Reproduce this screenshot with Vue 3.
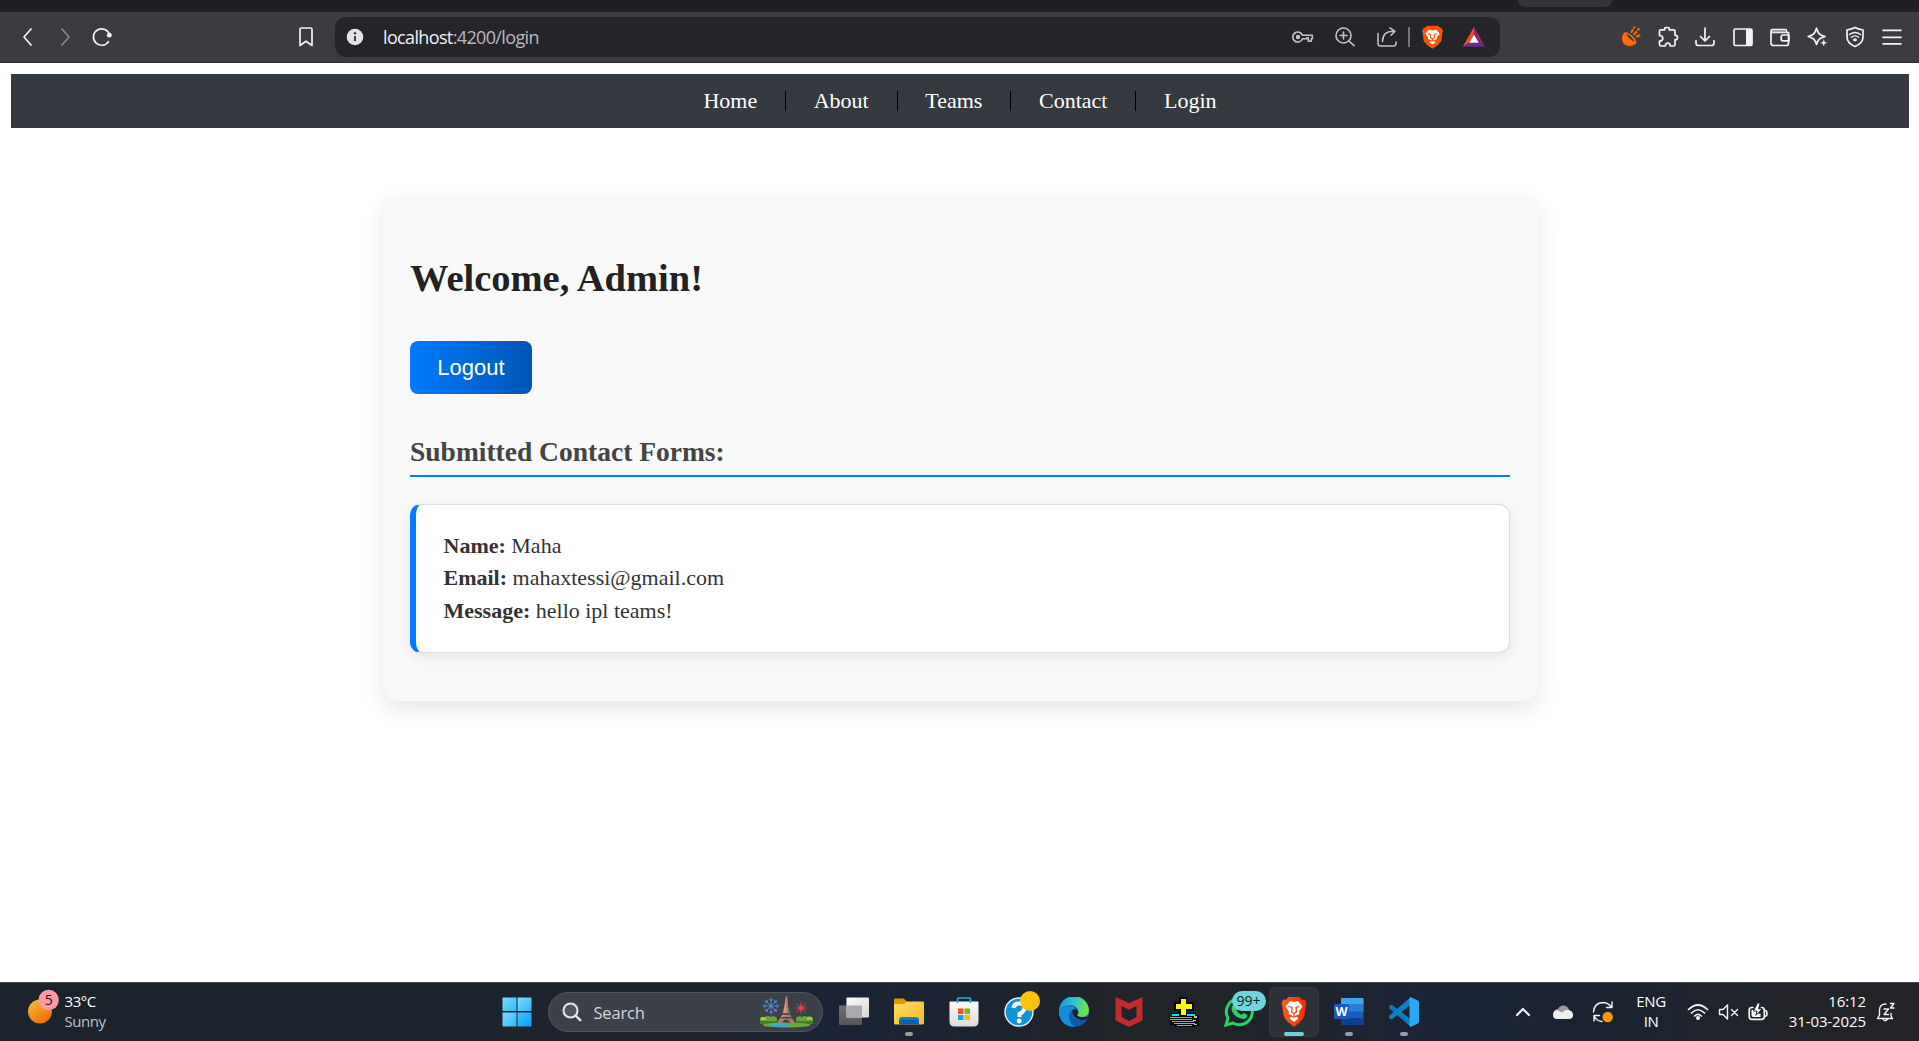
<script setup>
const links = ['Home', 'About', 'Teams', 'Contact', 'Login']
const form = [
  { label: 'Name:', value: 'Maha' },
  { label: 'Email:', value: 'mahaxtessi@gmail.com' },
  { label: 'Message:', value: 'hello ipl teams!' }
]
const rays = [0, 45, 90, 135, 180, 225, 270, 315]
</script>

<template>
  <div class="screen">
    <div class="tabstrip"><div class="tab-nub"></div></div>
    <header class="toolbar">
      <div class="nav-icons">
        <svg width="12" height="20" viewBox="0 0 12 20"><path d="M10 2 3 10l7 8" class="ln" /></svg>
        <svg width="12" height="20" viewBox="0 0 12 20" class="fwd"><path d="m2 2 7 8-7 8" class="ln dim" /></svg>
        <svg width="22" height="20" viewBox="0 0 22 20" class="reload"><path d="M17.5 14.6A8.2 8.2 0 1 1 18.6 8" class="ln" /><circle cx="18.3" cy="8.2" r="2.4" fill="#f3f3f5" /></svg>
      </div>
      <svg class="bookmark" width="16" height="22" viewBox="0 0 16 22"><path d="M2 3.5Q2 2 3.500 2h9Q14 2 14 3.500V19.500l-6-4.200-6 4.200Z" class="ln" /></svg>
      <div class="address">
        <svg class="info" width="18" height="18" viewBox="0 0 18 18"><circle cx="9" cy="9" r="8.300" fill="#e3e2e8" /><path d="M9 8v5" stroke="#3b3a40" stroke-width="2" /><circle cx="9" cy="5.300" r="1.200" fill="#3b3a40" /></svg>
        <span class="url"><b>localhost</b>:4200/login</span>
        <div class="address-icons">
          <span class="cell"><svg width="22" height="16" viewBox="0 0 22 16"><g fill="none" stroke="#c4c3ca" stroke-width="1.600" stroke-linejoin="round"><path d="M10.500 6.300A5 5 0 1 0 10.500 9.700h4.300v-1h1.500v3.600h3V9.700h1V6.300Z" /></g><circle cx="6" cy="8" r="2.200" fill="#c4c3ca" /></svg></span>
          <span class="cell"><svg width="22" height="22" viewBox="0 0 22 22"><g fill="none" stroke="#c4c3ca" stroke-width="1.600" stroke-linecap="round"><circle cx="9.500" cy="9.500" r="7.500" /><path d="m15 15 5 4.700M9.500 6v7M6 9.500h7" /></g></svg></span>
          <span class="cell"><svg width="22" height="22" viewBox="0 0 22 22"><g fill="none" stroke="#c4c3ca" stroke-width="1.500" stroke-linecap="round" stroke-linejoin="round"><path d="M2 7.500V17.500Q2 20 4.500 20h13Q20 20 20 17.500v-1.500" /><path d="M6.500 15.500C6.500 8.500 10 5.300 17.500 5.300M14 1.800l5 3.500-4 4" /></g></svg></span>
          <i class="bar"></i>
          <span class="cell brave"><svg width="21" height="24" viewBox="0 0 25 30" preserveAspectRatio="none"><path d="M6 1h13l2.500 2.500 2 .4L25 8l-.8 2L23 20l-4 5-6.500 4.700L6 25l-4-5L.8 10 0 8l1.500-4 2-.5Z" fill="#ff5008" /><path d="m8 6 4.500.8L17 6l4 5-3.500 4.500.5 2-4 2 2.500 2-4 3-4-3 2.500-2-4-2 .5-2L4 11Z" fill="#fff" /><path d="m7 11 3.500 1-.5 4 2.500 1.500L15 16l-.5-4 3.500-1M12.500 17.500v2.500M9.500 20h6" fill="none" stroke="#ff5008" stroke-width="1.300" /></svg></span>
          <span class="cell"><svg width="24" height="22" viewBox="0 0 24 22"><path d="M12 1 .7 20.700 7 17l5-9Z" fill="#ff4724" /><path d="M12 1 23.300 20.700 17 17l-5-9Z" fill="#9e1f63" /><path d="M.7 20.700h22.600L17 16.500H7Z" fill="#662d91" /><path d="m12 8.500 4.800 8.300H7.200Z" fill="#fff" /></svg></span>
        </div>
      </div>
      <div class="tools">
        <span><svg width="22" height="22" viewBox="0 0 22 22"><path d="M4.500 6.500C8 4.800 17 13 16.500 17 13.500 20.700 7 20.700 4 18 1 15 1.500 9 4.500 6.500Z" fill="#ff6a0a" /><path d="M6.500 8c2.500.5 7 4.500 8 7.500-2.500-.5-7-4-8-7.500Z" fill="#3c3b3f" /><path d="m11.500 6 1.200-2M14.200 8.300l2-2.300M16.800 10.500l2.700-1.200M14 1.800l.4-.6M18 3.800l.8-.8" stroke="#ff6a0a" stroke-width="2" stroke-linecap="round" /></svg></span>
        <span><svg width="22" height="22" viewBox="0 0 22 22"><path class="ln" d="M2.500 5Q2.500 3.800 3.700 3.800h4C7.300 1.500 8.500 1.500 10 1.500s2.700 0 2.300 2.300H16.500q1.500 0 1.500 1.500v4c2.200-.2 2.500 1 2.500 2.200s-.5 2.500-2.500 2.200V18.500q0 1.500-1.500 1.500h-3.300c.2-2-.9-2.800-2.400-2.800S8.200 18 8.500 20H4Q2.500 20 2.500 18.500V15c2.700 0 3.300-1.500 3.300-2.800S5 9.500 2.500 9.500Z" /></svg></span>
        <span><svg width="22" height="22" viewBox="0 0 22 22"><path class="ln" d="M11 2v12.500M6.500 10.500l4.500 4.500 4.500-4.500M2 14.500V17q0 2.500 2.500 2.500h13Q20 19.500 20 17v-2.500" /></svg></span>
        <span><svg width="22" height="22" viewBox="0 0 22 22"><rect x="2" y="3" width="18" height="16.500" rx="1.500" class="ln" /><path d="M14 3h6v16.500h-6z" fill="#f3f3f5" /></svg></span>
        <span><svg width="22" height="22" viewBox="0 0 22 22"><path class="ln" d="M19.500 9V6.500H3.500Q2 6.500 2 5t1.500-1.500H16.500q1 0 1 1.500v1.500M2 5v12q0 2.500 2.500 2.500h13q2 0 2-2V9M20 9h-6q-1.800 0-1.800 1.800V13q0 1.800 1.800 1.800h6Z" /><path d="M3 5.200h14" stroke="#a9a9ad" stroke-width="2" /></svg></span>
        <span><svg width="22" height="22" viewBox="0 0 22 22"><path class="ln" d="M9.500 2.200C11 7.500 12.500 9 18 10.500c-5.500 1.500-7 3-8.500 8C8 13.500 6.500 12 1.200 10.500 6.500 9 8 7.500 9.500 2.200Z" /><path d="M16.700 12.500l1.100 3.200 3.200 1.100-3.200 1.100-1.100 3.200-1.100-3.200-3.200-1.100 3.200-1.100Z" fill="#f3f3f5" stroke="#3c3b3f" stroke-width=".5" /></svg></span>
        <span><svg width="22" height="22" viewBox="0 0 22 22"><path class="ln" d="M11 1.500c2.500 1.500 5 2 8 2.500v7c0 4-3 7.500-8 9.500-5-2-8-5.500-8-9.500V4c3-.5 5.500-1 8-2.500Z" /><path class="ln thin" d="M5.500 8.500Q11 4.500 16.500 8.500M7.300 11.200q3.700-2.700 7.400 0" /><ellipse cx="11" cy="13.800" rx="2" ry="1.500" fill="#f3f3f5" /></svg></span>
        <span><svg width="22" height="22" viewBox="0 0 22 22"><path class="ln" d="M2 4.300h18M2 11.300h18M2 17.800h18" /></svg></span>
      </div>
    </header>

    <main class="page">
      <nav class="navbar">
        <a v-for="l in links" :key="l">{{ l }}</a>
      </nav>
      <section class="card">
        <h1>Welcome, Admin!</h1>
        <button>Logout</button>
        <h2>Submitted Contact Forms:</h2>
        <div class="entry">
          <p v-for="f in form" :key="f.label"><strong>{{ f.label }}</strong> {{ f.value }}</p>
        </div>
      </section>
    </main>

    <footer class="taskbar">
      <div class="weather">
        <svg width="33" height="40" viewBox="0 0 33 40">
          <defs><linearGradient id="sun" x1="0" y1="0" x2=".7" y2="1"><stop offset="0" stop-color="#f5c338" /><stop offset="1" stop-color="#f06a0b" /></linearGradient></defs>
          <circle cx="12" cy="23.500" r="12" fill="url(#sun)" /><circle cx="20.700" cy="12" r="10.200" fill="#ff99a4" />
          <text x="20.700" y="17" text-anchor="middle" font-size="14" fill="#1d1418">5</text>
        </svg>
        <div class="weather-text"><span>33°C</span><span class="muted">Sunny</span></div>
      </div>

      <div class="app"><svg width="30" height="30" viewBox="0 0 30 30">
        <defs><linearGradient id="win" x1="0" y1="0" x2="1" y2="1"><stop offset="0" stop-color="#79dcff" /><stop offset="1" stop-color="#31b8fb" /></linearGradient><linearGradient id="win2" x1="0" y1="0" x2="1" y2="1"><stop offset="0" stop-color="#41c5ff" /><stop offset="1" stop-color="#0f9bfa" /></linearGradient></defs>
        <path d="M1 .5h13.500V14H.5V1Z" fill="url(#win)" /><path d="M15.500.5H29l.5.500v13h-14Z" fill="url(#win)" /><path d="M.5 15.500h14V29.500H1L.5 29Z" fill="url(#win)" /><path d="M15.500 15.500h14V29l-.5.500H15.500Z" fill="url(#win2)" /></svg></div>

      <div class="search">
        <svg width="20" height="20" viewBox="0 0 20 20"><circle cx="8.500" cy="8.500" r="7" fill="#4f565f" stroke="#e8e9eb" stroke-width="2" /><path d="m13.700 13.700 4.500 4.500" stroke="#e8e9eb" stroke-width="2.400" stroke-linecap="round" /></svg>
        <span>Search</span>
        <svg class="paris" width="53" height="32" viewBox="0 0 53 32">
          <g stroke="#4b91dd" stroke-width=".9" fill="none">
            <path v-for="r in rays" :key="r" d="M11 10V1.500M9.300 3 11 5l1.700-2" :transform="`rotate(${r} 11 10)`" />
          </g>
          <g stroke="#e03c4a" stroke-width=".9">
            <path v-for="r in rays" :key="r" d="M41 12V6" :transform="`rotate(${r} 41 12)`" />
          </g>
          <circle cx="41" cy="12" r="2.400" fill="#ff3947" />
          <path d="M0 22q2-2 5-1 3-2 6 0 3-2 6 1v6H0ZM36 22q2-3 6-1 3-2 5 0 3-2 6 1v6H36Z" fill="#68a532" /><path d="M0 25h17v3H0zM36 25h17v3H36z" fill="#467b29" /><path d="M1 21h5v3H1zM47 21h5v3h-5z" fill="#9bc741" />
          <ellipse cx="26.500" cy="29" rx="24" ry="2.500" fill="#6aa83f" /><path d="M8 29q10-4 22 0l-3 2H12Z" fill="#42a8be" />
          <path d="M26 .5h1.200l1 10.500 2 8 5 8h-4.500q-4.500-7-9 0h-4.500l5-8 2-8Z" fill="#a77b6b" /><path d="M26 .5h.5V19l-3 1-6 7 5-8 2-8Z" fill="#d29a80" /><path d="M22 17h9v2h-9zM20.500 21h12v1.500h-12z" fill="#5b4a4d" />
        </svg>
      </div>

      <div class="app first"><svg width="30" height="30" viewBox="0 0 30 30">
        <defs><linearGradient id="tv" x1="0" y1="0" x2="1" y2="1"><stop offset="0" stop-color="#fff" /><stop offset="1" stop-color="#d5d5d7" /></linearGradient><linearGradient id="tv2" x1="0" y1="0" x2="0" y2="1"><stop offset="0" stop-color="#6d6f72" /><stop offset="1" stop-color="#565656" /></linearGradient></defs>
        <rect x="0" y="8.500" width="23" height="19.500" rx="1" fill="url(#tv2)" /><rect x="7.500" y=".5" width="22.500" height="20" rx="1" fill="url(#tv)" /><path d="M7.500 8.500H22q1 0 1 1v11H8.500q-1 0-1-1Z" fill="#a9aaac" /></svg></div>

      <div class="app"><svg width="30" height="30" viewBox="0 0 30 30">
        <defs><linearGradient id="fo" x1="0" y1="0" x2="1" y2="1"><stop offset="0" stop-color="#ffdc69" /><stop offset="1" stop-color="#f8b91f" /></linearGradient><linearGradient id="fb" x1="0" y1="0" x2="0" y2="1"><stop offset="0" stop-color="#1683d9" /><stop offset="1" stop-color="#075ba9" /></linearGradient></defs>
        <path d="M0 2.500Q0 1.500 1 1.500h8.500l3.500 3-2 3H0Z" fill="#dd9807" /><path d="M0 7h10l3-2.500h16q1 0 1 1V26q0 1.500-1.500 1.500h-27Q0 27.500 0 26Z" fill="url(#fo)" /><path d="M5 27.500V23q0-3 3-3h14q3 0 3 3v4.500Z" fill="url(#fb)" /><path d="M8.500 24h13" stroke="#0b4e91" stroke-width="1.300" /></svg><i class="dot"></i></div>

      <div class="app"><svg width="30" height="30" viewBox="0 0 30 30">
        <defs><linearGradient id="st" x1="0" y1="0" x2="0" y2="1"><stop offset="0" stop-color="#fafafa" /><stop offset="1" stop-color="#dcdcde" /></linearGradient></defs>
        <path d="M.5 4.500h29v20q0 5-5 5h-19q-5 0-5-5Z" fill="url(#st)" /><path d="M8.500 6V2q0-1 1-1h11q1 0 1 1v4" fill="none" stroke="#24aee9" stroke-width="1.600" /><path d="M9 11.500h5.500V17H9z" fill="#f04e24" /><path d="M15.500 11.500H21V17h-5.500z" fill="#80bb01" /><path d="M9 18h5.500v5H9z" fill="#08a4ee" /><path d="M15.500 18H21v5h-5.500z" fill="#ffb902" /></svg></div>

      <div class="app"><svg width="30" height="30" viewBox="0 0 30 30">
        <circle cx="15" cy="15" r="14" fill="#0b95d8" stroke="#e8f3fa" stroke-width="1.400" /><path d="M9.500 11Q10 6.500 15.500 6.500T20.500 11Q20.500 14 15.500 17v3" fill="none" stroke="#fff" stroke-width="4" /><circle cx="15.200" cy="24" r="2.400" fill="#fff" /></svg><i class="badge-dot"></i></div>

      <div class="app"><svg width="30" height="30" viewBox="0 0 30 30">
        <defs><linearGradient id="e1" x1="0" y1="0" x2="1" y2=".3"><stop offset="0" stop-color="#198dcc" /><stop offset=".5" stop-color="#2cc1cf" /><stop offset="1" stop-color="#6be34f" /></linearGradient><linearGradient id="e2" x1="0" y1="0" x2="1" y2="1"><stop offset="0" stop-color="#1680d1" /><stop offset="1" stop-color="#0e4b9b" /></linearGradient></defs>
        <circle cx="15" cy="15" r="15" fill="url(#e2)" /><path d="M0 15A15 15 0 0 1 30 13q0 7-7 7-5 0-5-2 2-2 1-5-2-5-8-5Q2 8 0 15Z" fill="url(#e1)" /><path d="M0 16Q2 9 10 9q4 0 6 3-7 1-6 9 1 5 6 9Q2 30 0 16Z" fill="#168cdb" /><path d="M13 14q3-4 6 0 1 3-1 4 2 3 10 2l2 .5q-3 3-8 2.500-8-2-9-9Z" fill="#1d2127" /><path d="M12.500 14.500q-1.500 5.500 4 8.500 6 2 12-1-4 7-12 7-9-4-4-14.500Z" fill="#0d59ac" /></svg></div>

      <div class="app"><svg width="30" height="30" viewBox="0 0 30 30"><path d="m1.500 0 13.500 6L28.500 0v23.500L15 30 1.500 23.500Zm6 9v11l7.500 4 7.500-4V9L15 12.800Z" fill="#c22a2c" fill-rule="evenodd" /></svg></div>

      <div class="app"><svg width="30" height="30" viewBox="0 0 30 30" shape-rendering="crispEdges">
        <path d="M3 16h24v2h3v11h-4v1H6v-2H1v-5H0v-4h3Z" fill="#050808" /><path d="M3 17h23v2H3zM1 20h22v1H1zM1 22h22v1H1zM3 24h22v1H3zM5 26h21v1H5zM8 28h15v1H8z" fill="#16e0e4" /><path d="M25 19h3v2h-3zM24 23h3v1h-3zM25 27h3v1h-3z" fill="#bdbdbd" /><path d="M10 0h8v5h7v9h-7v6h-8v-6H5V5h5Z" fill="#050500" /><path d="M12 2h5v5h6v5h-6v6h-5v-6H7V7h5Z" fill="#fffb00" /></svg></div>

      <div class="app"><svg width="30" height="30" viewBox="0 0 30 30"><path d="m2 28 2-7A13 13 0 1 1 9 26Z" fill="none" stroke="#25d466" stroke-width="3" /><path d="M10 7.500q2-1 3 1l1 3-1.500 2q2 3.500 5 4.500l2-2 4 2q-1 4-4 4-9-1-12-9-.500-4 2.500-5.500Z" fill="#25d466" /></svg><span class="count">99+</span></div>

      <div class="app active"><svg width="26" height="30" viewBox="0 0 25 30">
        <defs><linearGradient id="br" x1="0" y1="0" x2="1" y2="0"><stop offset="0" stop-color="#ff5a20" /><stop offset="1" stop-color="#f52b05" /></linearGradient></defs>
        <path d="M7 0h11l2.500 2.700 2.500-.2L25 6l-.8 3L23 18q-1 4-4 6.500L12.500 30 6 24.500Q3 22 2 18L.8 9 0 6l2-3.500 2.500.2Z" fill="url(#br)" /><path d="m8.500 4 4 1 4-1 4.500 5.500-3.500 5 .5 2.500-3.500 1.500 2.500 3-4.500 3.500L8 21.500l2.500-3L7 17l.5-2.500L4 9.500Z" fill="#fff" /><path d="m7 9.500 3.500 1-.5 4.500 2.500 1.500L15 15l-.5-4.500 3.500-1M12.500 16v3M9.500 19l3 1 3-1" fill="none" stroke="#fa4015" stroke-width="1.300" /></svg><i class="dot wide"></i></div>

      <div class="app"><svg width="30" height="30" viewBox="0 0 30 30"><rect x="7" y="1" width="22.500" height="27" rx="1" fill="#1b5cbd" /><path d="M7 2q0-1 1-1h20.500q1 0 1 1v5.500H7Z" fill="#41a5ee" /><path d="M7 7.500h22.500v7H7z" fill="#2b7cd3" /><path d="M7 21h22.500v6q0 1-1 1H8q-1 0-1-1Z" fill="#103f91" /><rect x="0" y="7" width="15" height="15" rx="1" fill="#185abd" /><text x="7.500" y="19" text-anchor="middle" font-size="12.500" font-weight="700" fill="#fff">W</text></svg><i class="dot"></i></div>

      <div class="app"><svg width="30" height="30" viewBox="0 0 30 30"><path d="m0 9.500 2.500-2L22 22.500V30L.5 11.500Z" fill="#0b7ac4" /><path d="m0 20.500 2.500 2L22 7.500V0L.5 18.500Z" fill="#138bd2" /><path d="m0 20.500 2.500 2L22 7.500V0l-9 8.500L.500 18.500Z" fill="#0875b9" opacity=".5" /><path d="m21.500 0 7.500 3.500q1 .5 1 2v19q0 1.500-1 2L21.500 30l-1-1.500V1.500Z" fill="#2aa8f0" /></svg><i class="dot"></i></div>

      <div class="tray">
        <span style="width: 40px"><svg width="16" height="12" viewBox="0 0 16 12"><path d="m2 9 6-6 6 6" class="ln heavy" /></svg></span>
        <span style="width: 40px"><svg width="22" height="16" viewBox="0 0 22 16"><path d="M2 10a4 4 0 0 1 4-5Q8 1 12 1.500q4 .5 5 4.500l-4 5Z" fill="#969a9f" /><path d="M1 11Q1 6.500 5 6l5 2.500Q13 5 17 6q4 1 4 5t-4 4H5q-4 0-4-4Z" fill="#eeeff0" /></svg></span>
        <span style="width: 40px"><svg width="22" height="22" viewBox="0 0 22 22"><path class="ln thin" d="M1.500 11Q2 2 11 1.500q5 0 8.500 4.500M20 1v5.500h-5.500M2 20v-5.500h5.500M2.500 15.500Q4.500 20 10 20.500" /><circle cx="15.700" cy="16" r="5.200" fill="#ff9800" /></svg></span>
        <span class="lang" style="width: 56px"><em>ENG</em><em>IN</em></span>
        <span style="width: 38px"><svg width="22" height="18" viewBox="0 0 22 18"><path class="ln" d="M1.500 6.500q9.500-9 19 0M4.500 10q6.500-6.500 13 0M7.700 13q3.300-3.300 6.600 0" /><circle cx="11" cy="15" r="2" fill="#fff" /></svg></span>
        <span style="width: 22px"><svg width="21" height="16" viewBox="0 0 21 16"><path class="ln thin" d="M1.500 5.500H5L9.500 1v14L5 10.500H1.500ZM13.500 5.500l6 6M19.500 5.500l-6 6" /></svg></span>
        <span style="width: 38px"><svg width="20" height="19" viewBox="0 0 20 19"><path class="ln" d="M5 4.500H4q-2.800 0-2.800 2.800v6.200q0 2.800 2.800 2.800h9.500q2.800 0 2.800-2.800V7.300q0-2.800-2.800-2.800M17.500 7.500q1.500.5 1.500 2.900t-1.500 2.900" /><path d="M3.500 7h4.500v3.500h4.500v3.500h-7q-2 0-2-2Z" fill="#fff" /><path d="M9.500 0 5.500 8H9l-1.200 4.500L14 5.800h-3.500L12 0Z" fill="#fff" stroke="#20242a" stroke-width=".9" /></svg></span>
        <span class="clock" style="width: 89px"><em>16:12</em><em>31-03-2025</em></span>
        <span style="width: 40px"><svg width="20" height="22" viewBox="0 0 20 22"><path class="ln thin" d="M10 3Q3.500 3 3.500 9v5L1.500 17.500h15L15 15v-2.500M7 18q2 3.500 4.500 0M8 8h4.500L8 13.500h4.500M14.500 2.500H18L14.500 7H18" /></svg></span>
      </div>
    </footer>
  </div>
</template>

<style>
body { background: #fff; overflow: hidden; }
</style>

<style scoped>
* { box-sizing: border-box; }
.screen { width: 1919px; height: 1041px; display: flex; flex-direction: column; background: #fff; font-family: "Liberation Serif", serif; }
svg { display: block; flex: none; }
.ln { fill: none; stroke: #f3f3f5; stroke-width: 1.7; stroke-linecap: round; stroke-linejoin: round; }
.ln.dim { stroke: #87868b; }
.ln.thin { stroke-width: 1.4; }
.ln.heavy { stroke-width: 2.2; }

.tabstrip { height: 12px; background: #202024; flex: none; }
.tab-nub { width: 94px; height: 7px; margin-left: 1518px; background: #34333a; border-radius: 0 0 10px 10px; }
.toolbar { height: 51px; flex: none; display: flex; align-items: flex-start; background: #3c3b3f; border-bottom: 1px solid #2b2a2f; }
.nav-icons { display: flex; width: 298px; padding: 15px 0 0 21px; }
.fwd { margin-left: 27px; }
.reload { margin-left: 19px; }
.bookmark { margin-top: 14px; }
.address { width: 1165px; height: 40px; margin: 5px 0 0 21px; padding: 0 5px 0 11px; border-radius: 11px; background: #252429; display: flex; align-items: center; }
.url { margin: -1px 0 0 19px; font: 18px/24px "Open Sans", "Noto Sans", sans-serif; letter-spacing: -0.64px; color: #bab9c0; }
.url b { font-weight: 400; color: #f1f0f5; }
.address-icons { margin-left: auto; display: flex; align-items: center; }
.cell { width: 42px; display: flex; justify-content: center; }
.bar { width: 2px; height: 20px; background: #76757b; margin: 0 1px 0 0; }
.tools { margin: 14px 8px 0 auto; display: flex; }
.tools span { width: 37.4px; display: flex; justify-content: center; }

.page { flex: 1; padding: 11px 10px 0 11px; }
.navbar { height: 54px; display: flex; justify-content: center; align-items: center; background: #343a40; }
.navbar a { padding: 0 27.8px; color: #fff; font-size: 22px; line-height: 20px; border-right: 1px solid #000; }
.navbar a:last-child { border-right: 0; }
.card { width: 1155px; height: 505px; margin: 68px auto 0; padding: 27.5px; border-radius: 16px; background: #f9f9f9; box-shadow: 0 8px 22px rgba(0, 0, 0, .1); }
h1 { margin: 32px 0 41.5px; font-size: 38.5px; line-height: 44px; color: #222; }
button { display: block; width: 122px; height: 53px; padding: 0; border: 0; border-radius: 8px; color: #fff; background: linear-gradient(to right, #007bff, #0056b3); font: 22px "Liberation Sans", sans-serif; }
h2 { margin: 42px 0 27px; height: 41px; font-size: 27.5px; line-height: 32px; color: #444; border-bottom: 2px solid #007bff; }
.entry { height: 149px; padding: 24.6px 27.5px 0; border: 1px solid #ddd; border-left: 6px solid #007bff; border-radius: 11px; background: #fff; box-shadow: 0 4px 14px rgba(0, 0, 0, .08); }
.entry p { margin: 0; font-size: 22px; line-height: 32.5px; color: #333; }

.taskbar { height: 59px; flex: none; display: flex; border-top: 1px solid #484a50; background: linear-gradient(90deg, #1c232d 0, #1c232c 36%, #1a2336 44%, #1c2330 51%, #202327 58%, #202328 65%, #1a2336 75%, #1b2332 84%, #212328 93%, #242327 100%); font-family: "Open Sans", "Noto Sans", sans-serif; color: #fff; }
.weather { width: 489.5px; padding: 5px 0 0 28px; display: flex; flex: none; }
.weather-text { display: flex; flex-direction: column; margin: 3px 0 0 3.5px; font-size: 15px; line-height: 20px; letter-spacing: -.45px; }
.muted { color: #bfc2c6; }
.app { position: relative; width: 55px; flex: none; display: flex; justify-content: center; padding-top: 14px; }
.first { margin-left: 4px; }
.search { width: 275px; height: 40px; margin: 9px 0 0 3px; flex: none; display: flex; align-items: center; padding: 0 9px 0 13px; border-radius: 20px; border: 1px solid #50565f; background: #3c4149; font-size: 16.5px; color: #d5d7da; }
.search span { margin-left: 12px; letter-spacing: -.2px; }
.paris { margin-left: auto; }
.dot { position: absolute; bottom: 5px; left: 23px; width: 8px; height: 4px; border-radius: 2px; background: #9a9ca3; }
.dot.wide { left: 17.5px; width: 20px; background: #6fd0da; }
.badge-dot { position: absolute; left: 28px; top: 8px; width: 20px; height: 20px; border-radius: 50%; background: #ffc20e; }
.count { position: absolute; left: 20px; top: 8px; width: 34px; height: 20px; border-radius: 10px; background: #73d2da; color: #142126; font-size: 14px; line-height: 20px; text-align: center; }
.active { width: 50px; margin: 4px 2.5px 0; height: 50px; padding-top: 9px; border-radius: 6px; background: #2d3036; border: 1px solid #35383e; }
.active .dot { left: 14px; bottom: 0; }
.tray { margin: 0 13px 0 auto; display: flex; }
.tray span { display: flex; align-items: center; justify-content: center; }
.tray em { font-style: normal; }
.tray .lang, .tray .clock { flex-direction: column; padding-bottom: 2px; font-size: 15px; line-height: 20px; letter-spacing: -.4px; }
.tray .clock { align-items: flex-end; letter-spacing: -.1px; }
</style>
